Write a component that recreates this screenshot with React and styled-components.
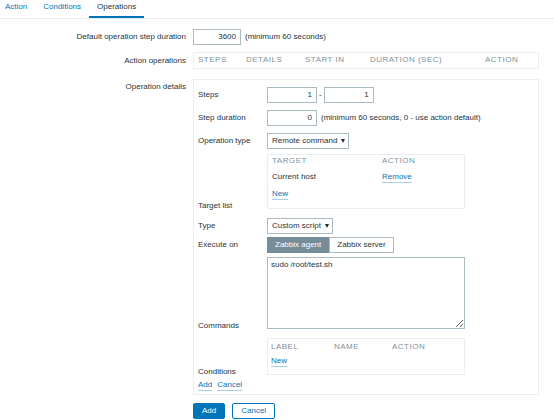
import React from 'react';
import styled, { createGlobalStyle } from 'styled-components';

const GlobalStyle = createGlobalStyle`
	html,
	body {
		margin: 0;
		padding: 0;
		background-color: #ffffff;
	}

	body {
		font-family: 'Liberation Sans', Arial, sans-serif;
		font-size: 8px;
		line-height: 10px;
		color: #26343b;
	}
`;

const Tabs = styled.ul`
	margin: 0;
	padding: 0;
	list-style: none;
	display: flex;
	height: 18px;
	border-bottom: 1px solid #ebeef0;
`;

const Tab = styled.li`
	box-sizing: border-box;
	height: 18px;
	padding: 2px 8px 0;
	color: ${p => (p.$active ? '#26343b' : '#0275b8')};
	border-bottom: 2px solid ${p => (p.$active ? '#0275b8' : 'transparent')};

	&:first-child {
		margin-left: -3px;
	}
`;

const Form = styled.div`
	padding-top: 10px;
`;

const FormRow = styled.div`
	display: grid;
	grid-template-columns: 193px 346px;
	align-items: ${p => p.$align || 'center'};
	margin-top: ${p => p.$mt || 0}px;
`;

const FormLabel = styled.div`
	padding-right: 7px;
	text-align: right;
	padding-top: ${p => p.$pt || 0}px;
`;

const Inline = styled.div`
	display: flex;
	align-items: center;
`;

const Input = styled.div`
	box-sizing: border-box;
	width: ${p => p.$w}px;
	height: 16px;
	padding: 2px 4px 0;
	border: 1px solid #acbbc2;
	text-align: right;
	background-color: #ffffff;
`;

const Hint = styled.span`
	margin-left: 4px;
`;

const Dash = styled.span`
	margin: 0 2px;
`;

const Box = styled.div`
	border: 1px solid #ebeef0;
	background-color: #ffffff;
`;

const OpsTable = styled(Box)`
	display: grid;
	grid-template-columns: 48px 59px 65px 115px 1fr;
	padding: 2px 4px 3px;
`;

const Th = styled.div`
	color: #7f929c;
	text-transform: uppercase;
	letter-spacing: 0.5px;
	white-space: nowrap;
`;

const DetailsBox = styled(Box)`
	padding: 7px 4px 3px;
`;

const DRow = styled.div`
	display: grid;
	grid-template-columns: 69px 1fr;
	align-items: center;
	margin-top: ${p => p.$mt || 0}px;
`;

const DLabel = styled.div`
	align-self: ${p => (p.$end ? 'end' : 'center')};
	margin-bottom: ${p => (p.$end ? '-2px' : '0')};
	white-space: nowrap;
`;

const Select = styled.div`
	box-sizing: border-box;
	display: inline-flex;
	align-items: center;
	gap: 4px;
	height: 16px;
	padding: 0 3px 0 4px;
	border: 1px solid #acbbc2;
	background-color: #ffffff;
	justify-self: start;
`;

const Caret = styled.span`
	width: 0;
	height: 0;
	border-left: 2.5px solid transparent;
	border-right: 2.5px solid transparent;
	border-top: 4px solid #1f2c33;
`;

const InnerTable = styled(Box)`
	width: 198px;
	box-sizing: border-box;
	display: grid;
	grid-template-columns: ${p => p.$cols};
	row-gap: ${p => p.$gap}px;
	padding: ${p => p.$pad};
`;

const Link = styled.a`
	color: #0275b8;
	text-decoration: none;
	border-bottom: 1px solid rgba(2, 117, 184, 0.35);
	cursor: pointer;
	justify-self: start;
	margin-right: ${p => p.$mr || 0}px;
`;

const Segmented = styled.div`
	display: flex;
	justify-self: start;
`;

const Segment = styled.div`
	box-sizing: border-box;
	height: 16px;
	padding: 2px 7px 0;
	border: 1px solid ${p => (p.$active ? '#768d99' : '#acbbc2')};
	background-color: ${p => (p.$active ? '#768d99' : '#ffffff')};
	color: ${p => (p.$active ? '#ffffff' : '#26343b')};
	white-space: nowrap;
`;

const Commands = styled.textarea`
	display: block;
	box-sizing: border-box;
	width: 198px;
	height: 72px;
	margin: 0;
	padding: 2px 3px;
	border: 1px solid #acbbc2;
	font-family: 'Liberation Sans', Arial, sans-serif;
	font-size: 8px;
	line-height: 10px;
	color: #26343b;
	outline: none;
`;

const Buttons = styled.div`
	display: flex;
	gap: 7px;
`;

const Button = styled.button`
	box-sizing: border-box;
	height: 16px;
	padding: 0 8px;
	border: 1px solid #0275b8;
	border-radius: 2px;
	background-color: ${p => (p.$primary ? '#0275b8' : '#ffffff')};
	color: ${p => (p.$primary ? '#ffffff' : '#0275b8')};
	font-family: 'Liberation Sans', Arial, sans-serif;
	font-size: 8px;
	line-height: 10px;
	cursor: pointer;
`;

const App = () => {
	return (
		<>
			<GlobalStyle />
			<Tabs>
				<Tab>Action</Tab>
				<Tab>Conditions</Tab>
				<Tab $active>Operations</Tab>
			</Tabs>

			<Form>
				<FormRow>
					<FormLabel>Default operation step duration</FormLabel>
					<Inline>
						<Input $w={48}>3600</Input>
						<Hint>(minimum 60 seconds)</Hint>
					</Inline>
				</FormRow>

				<FormRow $mt={7}>
					<FormLabel>Action operations</FormLabel>
					<OpsTable>
						<Th>Steps</Th>
						<Th>Details</Th>
						<Th>Start in</Th>
						<Th>Duration (sec)</Th>
						<Th>Action</Th>
					</OpsTable>
				</FormRow>

				<FormRow $mt={10} $align="start">
					<FormLabel $pt={3}>Operation details</FormLabel>
					<DetailsBox>
						<DRow>
							<DLabel>Steps</DLabel>
							<Inline>
								<Input $w={50}>1</Input>
								<Dash>-</Dash>
								<Input $w={50}>1</Input>
							</Inline>
						</DRow>

						<DRow $mt={7}>
							<DLabel>Step duration</DLabel>
							<Inline>
								<Input $w={50}>0</Input>
								<Hint>(minimum 60 seconds, 0 - use action default)</Hint>
							</Inline>
						</DRow>

						<DRow $mt={7}>
							<DLabel>Operation type</DLabel>
							<Select>
								Remote command
								<Caret />
							</Select>
						</DRow>

						<DRow $mt={5}>
							<DLabel $end>Target list</DLabel>
							<InnerTable $cols="110px 1fr" $gap={6} $pad="1px 4px 8px">
								<Th>Target</Th>
								<Th>Action</Th>
								<div>Current host</div>
								<Link>Remove</Link>
								<Link>New</Link>
							</InnerTable>
						</DRow>

						<DRow $mt={9}>
							<DLabel>Type</DLabel>
							<Select>
								Custom script
								<Caret />
							</Select>
						</DRow>

						<DRow $mt={3}>
							<DLabel>Execute on</DLabel>
							<Segmented>
								<Segment $active>Zabbix agent</Segment>
								<Segment>Zabbix server</Segment>
							</Segmented>
						</DRow>

						<DRow $mt={4}>
							<DLabel $end>Commands</DLabel>
							<Commands defaultValue="sudo /root/test.sh" spellCheck="false" />
						</DRow>

						<DRow $mt={9}>
							<DLabel $end>Conditions</DLabel>
							<InnerTable $cols="63px 58px 1fr" $gap={4} $pad="3px 3px 7px">
								<Th>Label</Th>
								<Th>Name</Th>
								<Th>Action</Th>
								<Link>New</Link>
							</InnerTable>
						</DRow>

						<DRow $mt={5}>
							<Inline>
								<Link $mr={5}>Add</Link>
								<Link>Cancel</Link>
							</Inline>
						</DRow>
					</DetailsBox>
				</FormRow>

				<FormRow $mt={8}>
					<div />
					<Buttons>
						<Button $primary>Add</Button>
						<Button>Cancel</Button>
					</Buttons>
				</FormRow>
			</Form>
		</>
	);
};

export default App;
